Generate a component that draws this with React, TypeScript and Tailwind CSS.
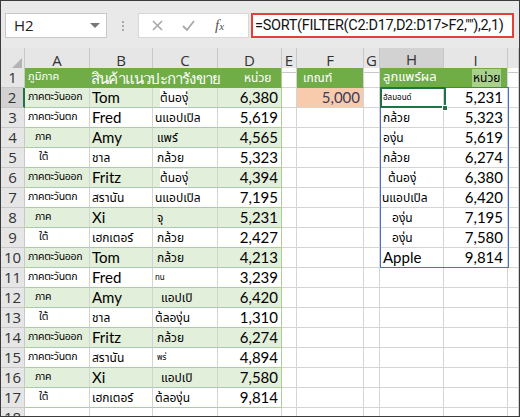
import React from "react";

// Column widths (px) including right gridline
const GRID = "grid grid-cols-[24px_65px_63px_65px_64px_15px_67px_16px_64px_64px_1fr]";
const LETTERS = ["A", "B", "C", "D", "E", "F", "G", "H", "I", ""];

const regions = ["ภาคตะวันออก", "ภาคตะวันตก", "ภาค", "ใต้"];
const regionPad = ["pl-[3px]", "pl-[3px]", "pl-[10px]", "pl-[14px]"];
const names = ["Tom", "Fred", "Amy", "ชาล", "Fritz", "สรานัน", "Xi", "เฮกเตอร์"];
const products: [string, string, string][] = [
  ["ต้นองุ่", "pl-[7px]", "text-[12px]"],
  ["นแอปเปิล", "pl-[2px]", "text-[12px]"],
  ["แพร์", "pl-[4px]", "text-[12px]"],
  ["กล้วย", "pl-[4px]", "text-[12px]"],
  ["ต้นองุ่", "pl-[7px]", "text-[12px]"],
  ["นแอปเปิล", "pl-[2px]", "text-[12px]"],
  ["จุ", "pl-[4px]", "text-[12px]"],
  ["กล้วย", "pl-[4px]", "text-[12px]"],
  ["กล้วย", "pl-[4px]", "text-[12px]"],
  ["ทน", "pl-[2px]", "text-[8px]"],
  ["แอปเปิ", "pl-[8px]", "text-[12px]"],
  ["ต้ลองุ่น", "pl-[2px]", "text-[12px]"],
  ["กล้วย", "pl-[4px]", "text-[12px]"],
  ["พร่", "pl-[4px]", "text-[8px]"],
  ["แอปเปิ", "pl-[8px]", "text-[12px]"],
  ["ต้ลองุ่น", "pl-[2px]", "text-[12px]"],
];
const units = ["6,380", "5,619", "4,565", "5,323", "4,394", "7,195", "5,231", "2,427", "4,213", "3,239", "6,420", "1,310", "6,274", "4,894", "7,580", "9,814"];

const results: [string, string, string][] = [
  ["อัลมอนด์", "5,231", "pl-[3px] text-[8px]"],
  ["กล้วย", "5,323", "pl-[3px] text-[12px]"],
  ["องุ่น", "5,619", "pl-[3px] text-[12px]"],
  ["กล้วย", "6,274", "pl-[3px] text-[12px]"],
  ["ต้นองุ่", "6,380", "pl-[8px] text-[12px]"],
  ["นแอปเปิล", "6,420", "pl-[2px] text-[12px]"],
  ["องุ่น", "7,195", "pl-[12px] text-[12px]"],
  ["องุ่น", "7,580", "pl-[12px] text-[12px]"],
  ["Apple", "9,814", "pl-[3px] text-[15px]"],
];

const thai = "font-['Tahoma','Noto_Sans_Thai','Noto_Sans',sans-serif]";
const latin = "font-['Lato','Liberation_Sans',sans-serif] text-[15px]";

const isThai = (s: string) => /[\u0E00-\u0E7F]/.test(s);

function Cell({ children, className = "" }: { children?: React.ReactNode; className?: string }) {
  return (
    <div className={`h-[20px] border-r border-b border-[#d4d4d4] flex items-center overflow-visible whitespace-nowrap text-black ${className}`}>
      {children}
    </div>
  );
}

export default function App() {
  return (
    <div className="w-[520px] h-[417px] border border-[#3c3c3c] bg-white overflow-hidden font-['Lato','Liberation_Sans',sans-serif]">
      {/* formula bar */}
      <div className="h-[47px] bg-[#e9e9e9] flex items-start pt-[12px] pl-[4px]">
        <div className="w-[102px] h-[25px] bg-white border border-[#c8c8c8] flex items-center justify-between pl-[8px] pr-[6px]">
          <span className="font-['Open_Sans',sans-serif] text-[15px] text-[#222]">H2</span>
          <span className="w-0 h-0 border-l-[5px] border-r-[5px] border-t-[5px] border-l-transparent border-r-transparent border-t-[#777]" />
        </div>
        <div className="w-[31px] h-[25px] flex flex-col items-center justify-center gap-[2px]">
          <span className="w-[2px] h-[2px] bg-[#aaa]" />
          <span className="w-[2px] h-[2px] bg-[#aaa]" />
          <span className="w-[2px] h-[2px] bg-[#aaa]" />
        </div>
        <div className="w-[111px] h-[25px] bg-white border border-[#d8d8d8] flex items-center pl-[12px] gap-[17px]">
          <svg width="13" height="13" viewBox="0 0 13 13" className="text-[#a8a8a8]">
            <path d="M2 2 L11 11 M11 2 L2 11" stroke="currentColor" strokeWidth="1.6" />
          </svg>
          <svg width="15" height="13" viewBox="0 0 15 13" className="text-[#a8a8a8]">
            <path d="M2 7 L6 11 L13 2" stroke="currentColor" strokeWidth="1.8" fill="none" />
          </svg>
          <span className="font-['Liberation_Serif',serif] italic text-[15px] text-[#555] ml-[2px]">
            f<span className="text-[11px]">x</span>
          </span>
        </div>
        <div className="ml-[2px] w-[263px] h-[25px] bg-white border-2 border-[#e2413b] flex items-center pl-[2px] overflow-hidden">
          <span className="font-['Roboto',sans-serif] text-[14.5px] tracking-[-0.3px] text-[#111] whitespace-nowrap">=SORT(FILTER(C2:D17,D2:D17&gt;F2,""),2,1)</span>
        </div>
      </div>

      <div className="relative">
        {/* column letters */}
        <div className={`${GRID} h-[20px] bg-[#e6e6e6]`}>
          <div className="border-r border-b border-[#c8c8c8] flex items-end justify-end pr-[2px] pb-[2px]">
            <svg width="12" height="12" viewBox="0 0 12 12">
              <path d="M12 0 L12 12 L0 12 Z" fill="#b4b4b4" />
            </svg>
          </div>
          {LETTERS.map((l, i) => (
            <div
              key={i}
              className={`flex items-center justify-center text-[15px] text-[#333] font-['Open_Sans',sans-serif] border-r border-[#c8c8c8] ${
                l === "H" ? "bg-[#d2d2d2] border-b-2 border-b-[#217346]" : "border-b border-b-[#c8c8c8]"
              }`}
            >
              {l}
            </div>
          ))}
        </div>

        {/* rows */}
        {Array.from({ length: 18 }, (_, idx) => {
          const r = idx + 1;
          const d = r - 2;
          const band = r >= 2 && r <= 17 ? (r % 2 === 0 ? "bg-[#e2efda]" : "bg-white") : "";
          const tableLine = "border-b-[#a9d08e]";
          const res = r >= 2 && r <= 10 ? results[r - 2] : null;
          return (
            <div key={r} className={GRID}>
              <div
                className={`h-[20px] flex items-center justify-center text-[15px] text-[#333] font-['Open_Sans',sans-serif] border-b border-[#c8c8c8] ${
                  r === 2 ? "bg-[#d2d2d2] border-r-2 border-r-[#217346]" : "bg-[#e6e6e6] border-r"
                }`}
              >
                {r}
              </div>
              {r === 1 ? (
                <>
                  <Cell className="bg-[#70ad47] border-r-[#70ad47] border-b-[#70ad47] pl-[3px]">
                    <span className={`${thai} text-white text-[11px]`}>ภูมิภาค</span>
                  </Cell>
                  <Cell className="bg-[#70ad47] border-r-[#70ad47] border-b-[#70ad47] pl-[1px]">
                    <span className="font-['Tahoma','Noto_Sans',sans-serif] text-[15px] leading-[18px] tracking-[-0.8px] text-white relative z-10">สินค้าแนวปะการังขาย</span>
                  </Cell>
                  <Cell className="bg-[#70ad47] border-r-[#70ad47] border-b-[#70ad47]" />
                  <Cell className="bg-[#70ad47] border-r-[#a9d08e] border-b-[#70ad47] pl-[26px]">
                    <span className={`${thai} text-white text-[12px]`}>หน่วย</span>
                  </Cell>
                  <Cell />
                  <Cell className="bg-[#70ad47] border-b-[#70ad47] pl-[6px]">
                    <span className={`${thai} text-white text-[12px]`}>เกณฑ์</span>
                  </Cell>
                  <Cell />
                  <Cell className="bg-[#70ad47] border-r-[#70ad47] border-b-[#70ad47] pl-[3px]">
                    <span className={`${thai} text-white text-[13px]`}>ลูกแพร์ผล</span>
                  </Cell>
                  <Cell className="bg-[#70ad47] border-b-[#70ad47] pl-[28px]">
                    <span className={`${thai} text-[12px] bg-[#a9d08e] text-black px-[1px]`}>หน่วย</span>
                  </Cell>
                  <Cell />
                </>
              ) : r <= 17 ? (
                <>
                  <Cell className={`${band} ${tableLine} ${regionPad[d % 4]}`}>
                    <span className={`${thai} text-[10.5px] tracking-[-0.3px]`}>{regions[d % 4]}</span>
                  </Cell>
                  <Cell className={`${band} ${tableLine} pl-[2px]`}>
                    <span className={isThai(names[d % 8]) ? `${thai} text-[12px]` : latin}>{names[d % 8]}</span>
                  </Cell>
                  <Cell className={`${band} ${tableLine} ${products[d][1]}`}>
                    <span className={`${thai} ${products[d][2]} ${r === 2 || r === 6 ? "bg-white" : ""}`}>{products[d][0]}</span>
                  </Cell>
                  <Cell className={`${band} ${tableLine} border-r-[#a9d08e] justify-end pr-[3px]`}>
                    <span className={latin}>{units[d]}</span>
                  </Cell>
                  <Cell />
                  {r === 2 ? (
                    <Cell className="bg-[#f8cbad] justify-end pr-[3px]">
                      <span className={`${latin} text-[#3c3c5a]`}>5,000</span>
                    </Cell>
                  ) : (
                    <Cell />
                  )}
                  <Cell />
                  <Cell className={res ? res[2].split(" ")[0] : ""}>
                    {res && (
                      <span className={`${res[0] === "Apple" ? "font-['Lato',sans-serif]" : thai} ${res[2].split(" ")[1]}`}>
                        {res[0]}
                      </span>
                    )}
                  </Cell>
                  <Cell className="justify-end pr-[4px]">{res && <span className={latin}>{res[1]}</span>}</Cell>
                  <Cell />
                </>
              ) : (
                <>
                  {Array.from({ length: 10 }, (_, i) => (
                    <Cell key={i} />
                  ))}
                </>
              )}
            </div>
          );
        })}

        {/* spill range outline H2:I10 */}
        <div className="absolute left-[379px] top-[39px] w-[129px] h-[181px] border border-[#4472c4] pointer-events-none" />
        {/* active cell H2 */}
        <div className="absolute left-[379px] top-[39px] w-[66px] h-[21px] border-2 border-[#217346] pointer-events-none" />
        <div className="absolute left-[441px] top-[57px] w-[6px] h-[6px] bg-[#217346] border border-white pointer-events-none" />
      </div>
    </div>
  );
}
